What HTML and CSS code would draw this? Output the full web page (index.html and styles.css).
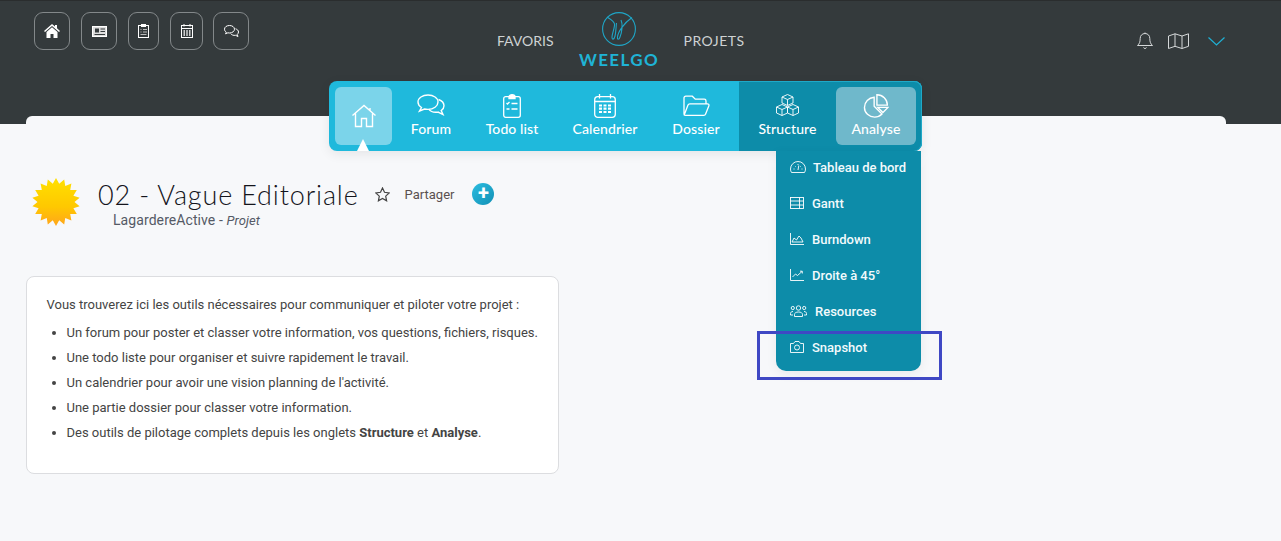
FILE: index.html
```html
<!DOCTYPE html>
<html lang="fr">
<head>
  <meta charset="UTF-8" />
  <title>Weelgo</title>
  <link rel="stylesheet" href="styles.css">
</head>
<body>
  <header class="topbar">
    <div class="shortcuts">
      <a class="shortcut w36"><svg width="16" height="14" viewBox="0 0 16 14"><path d="M0 7 8 0l3 2.600V1h2v3.300L16 7l-1 1-7-6-7 6z" fill="#fff"/><path d="M2.500 8 8 3.300 13.500 8v6H9.500V10h-3v4h-4z" fill="#fff"/></svg></a>
      <a class="shortcut w36"><svg width="15" height="11" viewBox="0 0 15 11" fill="none" stroke="#fff"><rect x=".5" y=".5" width="14" height="10" fill="#ddd" stroke="#fff"/><rect x="3" y="2.500" width="4" height="4" fill="#343a3c" stroke="none"/><path d="M8.500 3H13M8.500 5.500H13M2.500 8.500H13" stroke="#343a3c"/></svg></a>
      <a class="shortcut w31"><svg width="11" height="14" viewBox="0 0 11 14" fill="none" stroke="#fff"><rect x=".5" y="1.500" width="10" height="12"/><rect x="3.500" y=".5" width="4" height="2" fill="#fff"/><path d="M2.500 5.500h1M5 5.500h4M2.500 8h1M5 8h4M2.500 10.500h6" stroke="#bbb"/></svg></a>
      <a class="shortcut w33"><svg width="12" height="14" viewBox="0 0 12 14" fill="none" stroke="#fff"><rect x=".5" y="1.500" width="11" height="12"/><path d="M.5 4.500h11M3 0v2.500M9 0v2.500"/><path d="M2.500 7h7M2.500 9h7M2.500 11h7" stroke-dasharray="1.500 1.250" stroke-width="1.300"/></svg></a>
      <a class="shortcut w36 last"><svg width="15" height="13" viewBox="0 0 15 13" fill="none" stroke="#fff"><path d="M5.500.5C2.700.5.500 2 .500 4.200c0 1.300.7 2.300 1.800 3L1.500 8.800l2.400-1c.5.1 1 .2 1.600.2 2.800 0 5-1.700 5-3.800S8.300.5 5.500.5z"/><path d="M11.500 3.800c1.800.5 3 1.700 3 3.200 0 1-.5 1.800-1.300 2.400l.8 2.100-2.500-1.200c-2 .3-3.800-.3-4.800-1.600"/></svg></a>
    </div>
    <nav class="mainlinks">
      <a class="mainlink">FAVORIS</a>
      <div class="logo">
        <svg width="34" height="34" viewBox="0 0 34 34" fill="none" stroke="#1fa5c6" stroke-width="1.100"><circle cx="17" cy="17" r="16.400"/><path d="M5 5C8 7 12 9 12.500 12 13 15 10 22 10 25 10 28 12 28 13 24 14 20 14 15 14.500 11M19 8C21 12 20 20 18 25 17 28 15 28 15.500 25 16 20 22 11 30 5.500"/></svg>
        <span class="logo-name">WEELGO</span>
      </div>
      <a class="mainlink projets">PROJETS</a>
    </nav>
    <div class="account">
      <svg width="16" height="18" viewBox="0 0 16 18" fill="none" stroke="#d5d8d9"><path d="M8 1.500c-3 0-4.800 2.200-4.800 5 0 3.500-.8 5.300-2.700 7h15c-1.900-1.700-2.700-3.500-2.700-7 0-2.800-1.800-5-4.800-5zM6.500 15.500c.3 1.300 2.700 1.300 3 0M8 .5v1"/></svg>
      <svg width="21" height="16" viewBox="0 0 21 16" fill="none" stroke="#d5d8d9"><path d="M.5 3 7 .8l7 2.200L20.500.8v12.500L14 15.500l-7-2.200-6.500 2.200zM7 .8v12.500M14 3v12.500"/></svg>
      <svg class="chevron" width="17" height="9" viewBox="0 0 17 9" fill="none" stroke="#1fb0d4" stroke-width="1.200"><path d="M.5.5 8.500 8l8-7.500"/></svg>
    </div>
  </header>

  <div class="menu">
    <div class="menu-main">
      <a class="menu-tile home">
        <svg width="24" height="24" viewBox="0 0 24 24" fill="none" stroke="#fff" stroke-width="1.400"><path d="M.5 11.500 12 1.500l11.500 10M3.500 9.500V22.500h6v-8h5v8h6V9.500M18 4v3"/></svg>
      </a>
      <a class="menu-item forum">
        <svg width="28" height="24" viewBox="0 0 28 24" fill="none" stroke="#fff" stroke-width="1.400"><path d="M11 1C5.500 1 1 4 1 8c0 2.300 1.300 4.200 3.500 5.500L2.500 17l5-2c1 .3 2.200.4 3.500.4 5.500 0 10-3.300 10-7.400S16.500 1 11 1z"/><path d="M21.500 5.500C25 6.800 27 9 27 11.800c0 2-1 3.600-2.800 4.800l1.800 4-5-2.500c-3.800.6-7.500-.6-9.300-3"/></svg>
        <span>Forum</span>
      </a>
      <a class="menu-item todo">
        <svg width="18" height="24" viewBox="0 0 18 24" fill="none" stroke="#fff" stroke-width="1.300"><rect x=".7" y="2.700" width="16.600" height="20.600" rx="2"/><path d="M6 2.700C6 1.500 7.500.7 9 .7s3 .8 3 2V4.500H6z" fill="#fff"/><path d="m3.500 9 1 1 2-2M8.500 9.500h6M3.500 15h3M8.500 15h6" /></svg>
        <span>Todo list</span>
      </a>
      <a class="menu-item calendar">
        <svg width="22" height="24" viewBox="0 0 22 24" fill="none" stroke="#fff" stroke-width="1.300"><rect x=".7" y="2.700" width="20.600" height="20.600" rx="3"/><path d="M.7 7.500h20.600M5.500 0v4.500M16.500 0v4.500"/><path d="M5 11.500h12M5 14.700h12M5 18h12" stroke-width="2.200" stroke-dasharray="3 1.500"/></svg>
        <span>Calendrier</span>
      </a>
      <a class="menu-item folder">
        <svg width="27" height="24" viewBox="0 0 27 21" fill="none" stroke="#fff" stroke-width="1.300"><path d="M1 19V2.500C1 1.500 1.800.7 2.800.7h6.500l3 3h9c1 0 1.700.7 1.700 1.700V8M1.200 19.500 5 9.500c.3-.8 1-1.200 1.800-1.200h17.700c1 0 1.800 1 1.400 2l-3.400 8.500c-.3.700-1 1-1.700 1H2.500c-.8 0-1.300-.2-1.300-.3z"/></svg>
        <span>Dossier</span>
      </a>
    </div>
    <div class="menu-tools">
      <a class="menu-item structure">
        <svg width="25" height="24" viewBox="0 0 25 24" fill="none" stroke="#fff" stroke-width=".9"><path d="m12.500.5 5.500 2.500v6l-5.500 2.500L7 9V3zM7 3l5.500 2.500L18 3M12.500 5.500v6M7 10.500l5.500 2.500v6L7 21.500 1.500 19v-6zM1.500 13 7 15.500l5.500-2.500M7 15.500v6M18 10.500l5.500 2.500v6L18 21.500 12.500 19v-6zM12.500 13l5.500 2.500 5.500-2.500M18 15.500v6"/></svg>
        <span>Structure</span>
      </a>
      <a class="menu-tile analyse">
        <svg width="26" height="24" viewBox="0 0 27 26" fill="none" stroke="#fff" stroke-width="1.500"><path d="M11.500 3.500C5.500 4 1 8.500 1 14.500 1 20.500 6 25 12 25c3.200 0 6-1.200 8-3.300l-8.500-8.500z"/><path d="M14.500.8V12H25.800C25.800 5.800 20.700.8 14.500.8zM15.500 14.500h11l-5.500 5.500z"/></svg>
        <span>Analyse</span>
      </a>
      <ul class="dropdown">
        <li class="drop-item wide">
          <svg width="16" height="12" viewBox="0 0 16 12" fill="none" stroke="#fff" stroke-width=".9"><path d="M1.500 11.500C.8 10.500.5 9.300.5 8a7.500 7.500 0 0 1 15 0c0 1.300-.3 2.500-1 3.500zM8 3v1M3.500 8h1M11.500 8h1M5 5l.6.6M11 5l-.6.6M8.800 4.500 8 9"/></svg>
          <span>Tableau de bord</span>
        </li>
        <li class="drop-item">
          <svg width="14" height="12" viewBox="0 0 14 12" fill="none" stroke="#fff" stroke-width=".9"><rect x=".5" y=".5" width="13" height="11"/><path d="M.5 4h13M.5 8h13M9.500 .5v11"/></svg>
          <span>Gantt</span>
        </li>
        <li class="drop-item">
          <svg width="14" height="12" viewBox="0 0 14 12" fill="none" stroke="#fff" stroke-width=".9"><path d="M.5 0v11.500H14"/><path d="M2 9l2-4 2.500 2 2.500-4 2 2 2 4z"/></svg>
          <span>Burndown</span>
        </li>
        <li class="drop-item">
          <svg width="14" height="12" viewBox="0 0 14 12" fill="none" stroke="#fff" stroke-width=".9"><path d="M.5 0v11.500H14"/><path d="M2.500 8 5.500 5l2 1.500L12 2.500M10 2.200h2.300v2.300"/></svg>
          <span>Droite à 45°</span>
        </li>
        <li class="drop-item wider">
          <svg width="17" height="12" viewBox="0 0 17 12" fill="none" stroke="#fff" stroke-width=".9"><circle cx="8.500" cy="3" r="2.200"/><circle cx="2.800" cy="3" r="1.600"/><circle cx="14.200" cy="3" r="1.600"/><path d="M4.500 11.500V9.500c0-1.500 1.500-2.500 4-2.500s4 1 4 2.500v2zM3 6.500c-1.500 0-2.500.8-2.500 2V10H3M14 6.500c1.500 0 2.500.8 2.500 2V10H14"/></svg>
          <span>Resources</span>
        </li>
        <li class="drop-item">
          <svg width="14" height="12" viewBox="0 0 14 12" fill="none" stroke="#fff" stroke-width=".9"><path d="M.5 2.500h3L5 .5h4l1.500 2h3v9H.5z"/><circle cx="7" cy="6.500" r="2.500"/></svg>
          <span>Snapshot</span>
        </li>
      </ul>
    </div>
    <span class="highlight"></span>
  </div>

  <main class="panel">
    <div class="project">
      <svg class="sun" width="48" height="48" viewBox="0 0 48 48">
        <defs><linearGradient id="sungrad" x1="0" y1="0" x2="0" y2="1"><stop offset="0" stop-color="#ffe000"/><stop offset=".6" stop-color="#ffc800"/><stop offset="1" stop-color="#ffa51c"/></linearGradient></defs>
        <polygon fill="url(#sungrad)" points="24,0 27.200,5.800 32.200,1.400 33.250,8 39.400,5.600 38.200,12.100 44.800,12 41.400,17.700 47.600,19.800 42.500,24 47.600,28.200 41.400,30.300 44.800,36 38.200,35.900 39.400,42.400 33.250,40 32.200,46.600 27.200,42.200 24,48 20.800,42.200 15.800,46.600 14.750,40 8.600,42.400 9.800,35.900 3.200,36 6.600,30.300 .4,28.200 5.500,24 .4,19.800 6.600,17.700 3.200,12 9.800,12.100 8.600,5.600 14.750,8 15.800,1.400 20.800,5.800"/>
      </svg>
      <div class="project-text">
        <div class="title-row">
          <h1>02 - Vague Editoriale</h1>
          <svg class="star" width="15" height="15" viewBox="0 0 15 15" fill="none" stroke="#444" stroke-width="1.200"><path d="m7.500 1 2 4.300 4.700.6-3.500 3.200.9 4.700-4.100-2.300-4.100 2.300.9-4.700L.8 5.900l4.700-.6z"/></svg>
          <span class="share">Partager</span>
          <span class="plus">+</span>
        </div>
        <p class="subtitle">LagardereActive - <em>Projet</em></p>
      </div>
    </div>

    <section class="card">
      <p>Vous trouverez ici les outils nécessaires pour communiquer et piloter votre projet :</p>
      <ul>
        <li>Un forum pour poster et classer votre information, vos questions, fichiers, risques.</li>
        <li>Une todo liste pour organiser et suivre rapidement le travail.</li>
        <li>Un calendrier pour avoir une vision planning de l'activité.</li>
        <li>Une partie dossier pour classer votre information.</li>
        <li>Des outils de pilotage complets depuis les onglets <b>Structure</b> et <b>Analyse</b>.</li>
      </ul>
    </section>
  </main>
</body>
</html>
```

FILE: styles.css
```css
* { box-sizing: border-box; }
html, body { height: 100%; }
body {
  margin: 0;
  background-color: #f7f8fa;
  font-family: Roboto, sans-serif;
  color: #444;
  overflow: hidden;
}

/* top bar */
.topbar {
  height: 124px;
  background-color: #343a3c;
  border-top: 1px solid #2a2d2e;
  display: flex;
  align-items: flex-start;
  padding: 11px 0 0 34px;
}
.shortcuts { display: flex; gap: 11px; }
.shortcut {
  height: 38px;
  border: 1px solid #83888a;
  border-radius: 9px;
  display: flex;
  align-items: center;
  justify-content: center;
}
.w36 { width: 36px; }
.w31 { width: 31px; }
.w33 { width: 33px; }
.shortcut.last { margin-left: -1px; }
.mainlinks { display: flex; margin-left: 248px; }
.mainlink {
  font-family: Lato, sans-serif;
  font-size: 14px;
  color: #ced2d3;
  padding-top: 20px;
}
.projets { letter-spacing: .5px; }
.logo {
  width: 79px;
  margin: 0 25px 0 26px;
  display: flex;
  flex-direction: column;
  align-items: center;
}
.logo-name {
  font-family: Lato, sans-serif;
  font-size: 17px;
  font-weight: 700;
  letter-spacing: 1.4px;
  color: #1fb3d6;
  margin-top: 3px;
  white-space: nowrap;
}
.account {
  display: flex;
  align-items: center;
  gap: 15px;
  margin-left: 392px;
  margin-top: 20px;
}
.chevron { margin-left: 4px; }

/* blue menu */
.menu {
  position: absolute;
  top: 81px;
  left: 329px;
  width: 593px;
  height: 70px;
  display: flex;
  background-color: #1fb9dc;
  border-radius: 8px;
  box-shadow: 0 3px 12px rgba(0, 0, 0, .08);
  font-family: Lato, sans-serif;
  font-size: 14px;
  font-weight: 500;
  letter-spacing: .1px;
  color: #fff;
}
.menu-main {
  width: 410px;
  display: flex;
  align-items: flex-start;
  padding: 6px 0 0 6px;
}
.menu-tools {
  position: relative;
  width: 183px;
  display: flex;
  align-items: flex-start;
  padding-top: 6px;
  background-color: #0d8ca9;
  border-radius: 0 8px 8px 0;
  box-shadow: inset 0 1px 0 #1fa9c8, inset -1px 0 0 #1fa9c8;
}
.menu-item, .menu-tile {
  height: 58px;
  display: flex;
  flex-direction: column;
  align-items: center;
  justify-content: flex-end;
  gap: 2px;
  padding-bottom: 8px;
}
.menu-tile { border-radius: 6px; }
.home {
  position: relative;
  width: 57px;
  background-color: #7bd4ea;
  justify-content: center;
  padding-bottom: 0;
}
.home::after {
  content: "";
  position: absolute;
  left: 22px;
  top: 52px;
  border-left: 6px solid transparent;
  border-right: 6px solid transparent;
  border-bottom: 12px solid #fff;
}
.forum { width: 78px; }
.todo { width: 84px; }
.calendar { width: 102px; }
.folder { width: 80px; }
.structure { width: 97px; }
.analyse { width: 80px; background-color: #6fb8cb; }

/* structure dropdown */
.dropdown {
  position: absolute;
  top: 70px;
  left: 37px;
  width: 145px;
  height: 220px;
  margin: 0;
  padding: 0;
  list-style: none;
  background-color: #0d8ca9;
  border-radius: 0 0 10px 10px;
  box-shadow: 0 3px 12px rgba(0, 0, 0, .06);
  font-family: Roboto, sans-serif;
  font-size: 13px;
  font-weight: 500;
  letter-spacing: 0;
  color: #f2fafc;
}
.drop-item {
  height: 36px;
  display: flex;
  align-items: center;
  gap: 8px;
  padding-left: 14px;
}
.drop-item:first-child { margin-top: -2px; }
.drop-item.wide { gap: 7px; }
.drop-item.wider { gap: 8px; }
.highlight {
  position: absolute;
  top: 250px;
  left: 428px;
  width: 185px;
  height: 49px;
  border: 3px solid #3f48c4;
}

/* page */
.panel {
  width: 1200px;
  height: 420px;
  margin: -8px 0 0 26px;
  background-color: #f7f8fa;
  border-radius: 6px 6px 0 0;
  padding-top: 54px;
}
.project {
  display: flex;
  align-items: flex-start;
  margin-left: 6px;
}
.sun { margin-top: 8px; }
.project-text { margin-left: 18px; }
.title-row { display: flex; align-items: center; height: 48px; }
h1 {
  margin: 0;
  font-family: Lato, sans-serif;
  font-size: 27px;
  font-weight: 300;
  letter-spacing: .85px;
  color: #14141c;
  white-space: nowrap;
}
.star { margin-left: 16px; }
.share { margin-left: 15px; font-size: 13px; color: #5a5050; }
.plus {
  width: 22px;
  height: 22px;
  margin-left: 18px;
  border-radius: 50%;
  background: linear-gradient(135deg, #2cbde0, #1290b5);
  color: #fff;
  font-size: 20px;
  font-weight: 700;
  line-height: 21px;
  text-align: center;
}
.subtitle {
  margin: -6px 0 0 15px;
  font-size: 14px;
  letter-spacing: .08px;
  color: #555a66;
}
.subtitle em { font-size: 13px; }

.card {
  width: 533px;
  height: 198px;
  margin-top: 48px;
  background-color: #fff;
  border: 1px solid #dcdde0;
  border-radius: 8px;
  padding: 19px 10px 0 19.5px;
  font-size: 13px;
  line-height: 17px;
  color: #444;
}
.card p { margin: 0; }
.card ul { margin: 11px 0 0; padding-left: 20px; }
.card li { margin-bottom: 8px; }
```
